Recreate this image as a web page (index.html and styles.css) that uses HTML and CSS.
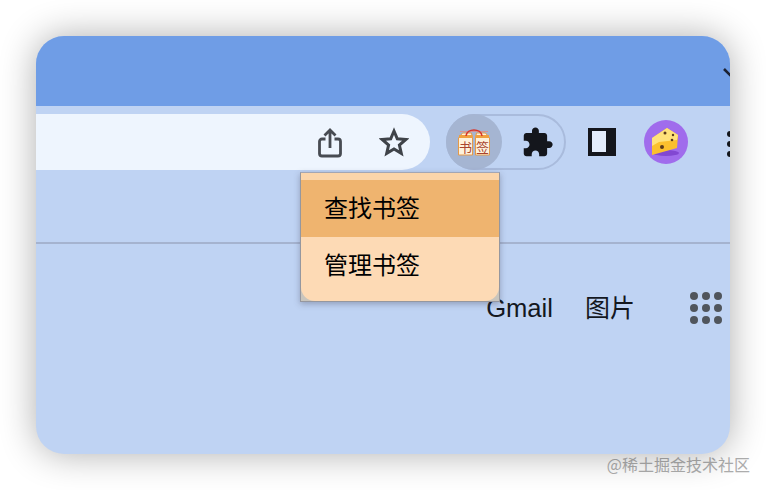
FILE: index.html
```html
<!DOCTYPE html>
<html lang="zh-CN">
<head>
  <meta charset="UTF-8" />
  <title>书签</title>
  <link rel="stylesheet" href="styles.css">
</head>
<body>
  <div class="window">
    <div class="tabstrip">
      <svg class="chevron" width="24" height="14" viewBox="0 0 24 14"><path d="M2 2l10 10L22 2" fill="none" stroke="#1c2233" stroke-width="2.6"/></svg>
    </div>

    <div class="toolbar">
      <div class="address">
        <svg class="share" width="24" height="30" viewBox="0 0 24 30"><path d="M7.500 11H4a2.500 2.500 0 0 0-2.500 2.500v12A2.500 2.500 0 0 0 4 28h16a2.500 2.500 0 0 0 2.500-2.500v-12A2.500 2.500 0 0 0 20 11h-3.500M12 20V2.500M6.500 7.500L12 2l5.500 5.500" fill="none" stroke="#474b52" stroke-width="2.800"/></svg>
        <svg class="star" width="30" height="30" viewBox="0 0 30 30"><path d="M15 4l3.300 7.800 8.500.7-6.400 5.600 1.900 8.300L15 22l-7.300 4.400 1.900-8.300-6.400-5.600 8.500-.7z" fill="none" stroke="#3f4349" stroke-width="3" stroke-linejoin="miter"/></svg>
      </div>

      <div class="extensions">
        <div class="ext-active">
          <svg class="bookmark-icon" width="34" height="30" viewBox="0 0 34 30">
            <path d="M3 4.500h28" stroke="#e58a80" stroke-width="0.800"/>
            <path d="M1.500 11l4-5h9l1 5v17h-14z" fill="#fdf1dc" stroke="#e49a4a" stroke-width="1"/>
            <path d="M18.500 11l1-5h9l4 5v17h-14z" fill="#fdf1dc" stroke="#e49a4a" stroke-width="1"/>
            <path d="M2 8h13.500v3H2zM18.500 8H32v3H18.500z" fill="#f0a040"/>
            <path d="M9 9C10 1 24 1 25 9" fill="none" stroke="#d8352a" stroke-width="1.600"/>
            <text x="8.500" y="25" class="tag-text">书</text>
            <text x="25.500" y="25" class="tag-text">签</text>
          </svg>
        </div>
        <svg class="puzzle" width="33" height="33" viewBox="0 0 24 24"><path d="M20.500 11H19V7c0-1.100-.9-2-2-2h-4V3.500C13 2.120 11.880 1 10.500 1S8 2.120 8 3.500V5H4c-1.100 0-1.990.9-1.990 2v3.800H3.500c1.490 0 2.700 1.210 2.700 2.700s-1.210 2.700-2.700 2.700H2V20c0 1.100.9 2 2 2h3.800v-1.500c0-1.490 1.210-2.700 2.700-2.700 1.490 0 2.700 1.210 2.700 2.700V22H17c1.100 0 2-.9 2-2v-4h1.500c1.380 0 2.500-1.120 2.500-2.500S21.880 11 20.500 11z" fill="#14161c"/></svg>
      </div>

      <div class="side-panel"></div>

      <div class="avatar">
        <svg width="44" height="44" viewBox="0 0 44 44">
          <ellipse cx="22" cy="33" rx="13" ry="3" fill="#8247d2"/>
          <path d="M8 18L23 8l11 7-1 13L8 35z" fill="#fbc02d"/>
          <path d="M8 18L23 8l11 7-1 5-18 2-7 4z" fill="#ffe27a"/>
          <circle cx="21" cy="13" r="1.500" fill="#5b3a1a"/>
          <circle cx="29" cy="15" r="1.200" fill="#5b3a1a"/>
          <circle cx="28" cy="20" r="1.300" fill="#5b3a1a"/>
          <circle cx="18" cy="27" r="2" fill="#5b3a1a"/>
        </svg>
      </div>

      <div class="more-dots"><i></i><i></i><i></i></div>
    </div>

    <div class="bookmarks-bar"></div>

    <div class="page-links">
      <span class="link gmail">Gmail</span>
      <span class="link images">图片</span>
      <div class="apps">
        <i></i><i></i><i></i><i></i><i></i><i></i><i></i><i></i><i></i>
      </div>
    </div>

    <!-- context menu sits over the bar -->
    <div class="menu">
      <div class="menu-top"></div>
      <div class="menu-item hover">查找书签</div>
      <div class="menu-item">管理书签</div>
    </div>
  </div>

  <div class="watermark">@稀土掘金技术社区</div>
</body>
</html>
```

FILE: styles.css
```css
body {
  margin: 0;
  padding: 36px 16px 0 36px;
  height: 490px;
  box-sizing: border-box;
  overflow: hidden;
  background-color: #fff;
  font-family: "Liberation Sans", "Noto Sans CJK SC", sans-serif;
}

.window {
  position: relative;
  width: 694px;
  height: 418px;
  border-radius: 28px;
  overflow: hidden;
  background-color: #bfd3f3;
  box-shadow: 0 0 36px rgba(0, 0, 0, 0.32);
}

.tabstrip {
  height: 70px;
  background-color: #6f9de6;
  display: flex;
  justify-content: flex-end;
  align-items: flex-start;
}

.chevron {
  margin-top: 31px;
  margin-right: -16px;
  flex-shrink: 0;
}

.toolbar {
  height: 64px;
  padding-top: 8px;
  display: flex;
  align-items: flex-start;
}

.address {
  width: 394px;
  height: 56px;
  flex-shrink: 0;
  box-sizing: border-box;
  padding-right: 21px;
  display: flex;
  align-items: center;
  justify-content: flex-end;
  gap: 37px;
  background-color: #eef5fe;
  border-radius: 0 28px 28px 0;
}

.share {
  margin-top: 2px;
}

.extensions {
  width: 120px;
  height: 56px;
  flex-shrink: 0;
  margin-left: 16px;
  box-sizing: border-box;
  border: 2px solid #a9bbdc;
  border-radius: 28px;
  display: flex;
  align-items: center;
}

.ext-active {
  width: 56px;
  height: 56px;
  margin-left: -2px;
  flex-shrink: 0;
  border-radius: 50%;
  background-color: #a5b5d2;
  display: flex;
  align-items: center;
  justify-content: center;
}

.tag-text {
  font-family: "Noto Sans CJK SC", sans-serif;
  font-size: 13px;
  fill: #a8432f;
  text-anchor: middle;
}

.puzzle {
  margin-left: 19px;
  flex-shrink: 0;
}

.side-panel {
  width: 28px;
  height: 28px;
  flex-shrink: 0;
  margin-left: 22px;
  margin-top: 14px;
  box-sizing: border-box;
  background-color: #e3ecfb;
  border-style: solid;
  border-color: #14161c;
  border-width: 3px 10px 4px 4px;
}

.avatar {
  width: 44px;
  height: 44px;
  flex-shrink: 0;
  margin-left: 28px;
  margin-top: 6px;
  border-radius: 50%;
  background-color: #a06cec;
}

.more-dots {
  margin-left: 39px;
  margin-top: 17px;
  flex-shrink: 0;
  display: flex;
  flex-direction: column;
  gap: 4px;
}

.more-dots i {
  display: block;
  width: 6px;
  height: 6px;
  border-radius: 50%;
  background-color: #14161c;
}

.bookmarks-bar {
  height: 64px;
  border-bottom: 2px solid #a5b3cf;
}

.page-links {
  padding: 48px 8px 0 0;
  display: flex;
  justify-content: flex-end;
  align-items: center;
  color: #14181f;
}

.link {
  font-size: 25.600px;
  line-height: 32px;
}

.images {
  font-size: 25px;
  margin-left: 32px;
}

.apps {
  margin-left: 55px;
  display: grid;
  grid-template-columns: repeat(3, 8px);
  gap: 4px;
}

.apps i {
  display: block;
  width: 8px;
  height: 8px;
  border-radius: 50%;
  background-color: #50555c;
}

.menu {
  position: absolute;
  left: 264px;
  top: 136px;
  width: 200px;
  height: 130px;
  box-sizing: border-box;
  border: 1px solid #95979f;
  border-top-color: #a3a6b4;
  background-color: #c9c5bd;
  overflow: hidden;
  box-shadow: 0 2px 6px rgba(60, 60, 80, 0.35);
}

.menu-top {
  height: 7px;
  background-color: #fbd5aa;
}

.menu-item {
  height: 57px;
  padding-left: 23px;
  font-family: "Noto Sans CJK SC", sans-serif;
  font-size: 24px;
  line-height: 54px;
  color: #000;
  background-color: #fddab5;
}

.menu-item.hover {
  background-color: #efb46f;
}

.menu-item:last-child {
  height: 64px;
  border-radius: 0 0 14px 14px;
}

.watermark {
  margin-top: -1px;
  text-align: right;
  font-family: "Noto Sans CJK SC", sans-serif;
  font-size: 16px;
  line-height: 22px;
  color: #aeaeae;
}
```
